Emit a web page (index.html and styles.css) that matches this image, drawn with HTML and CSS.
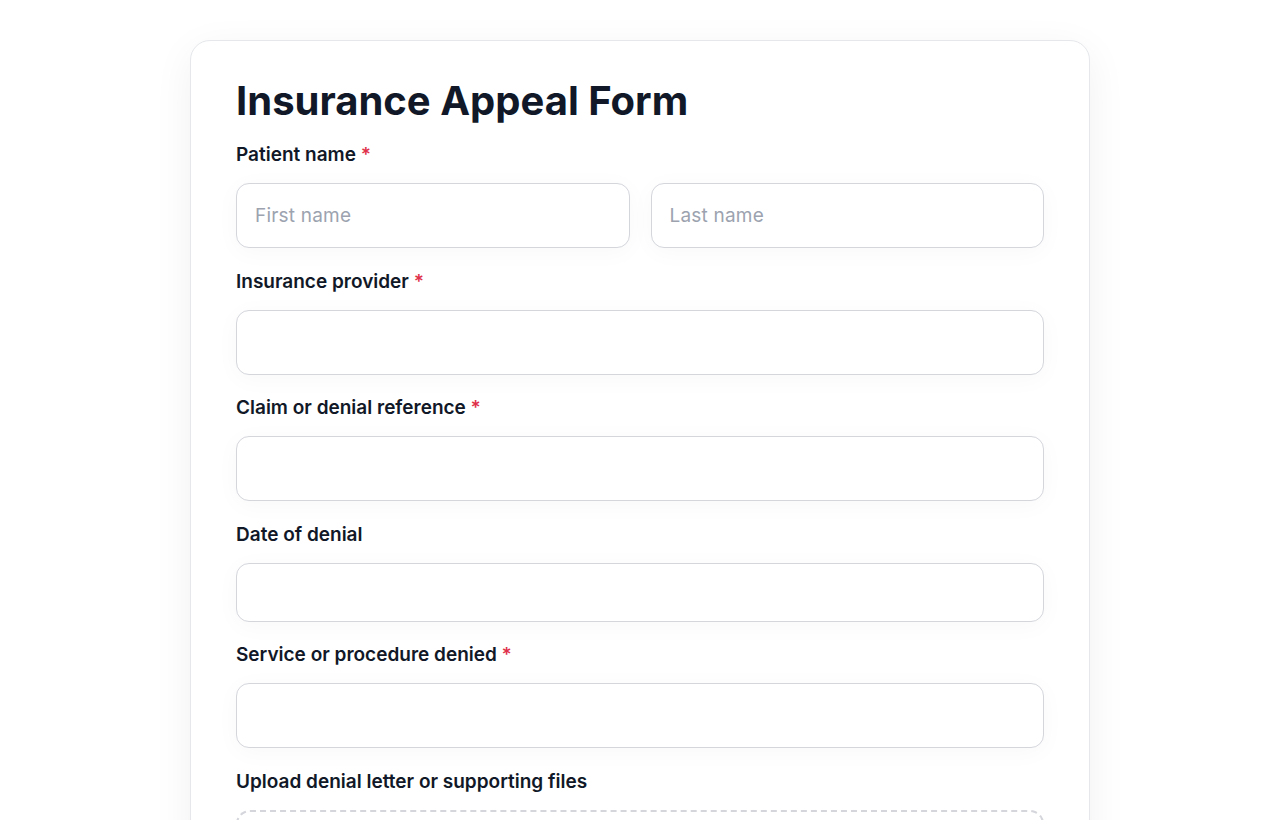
FILE: index.html
```html
<!DOCTYPE html>
<html lang="en">
<head>
  <meta charset="UTF-8" />
  <meta name="viewport" content="width=device-width, initial-scale=1.0"/>
  <title>Insurance Appeal Form</title>
  <link rel="stylesheet" href="styles.css">
</head>
<body>
  <div class="card">
    <h1 class="title">Insurance Appeal Form</h1>

    <div class="field">
      <label class="label">Patient name <span class="req">*</span></label>
      <div class="row">
        <input class="input" type="text" placeholder="First name">
        <input class="input" type="text" placeholder="Last name">
      </div>
    </div>

    <div class="field">
      <label class="label">Insurance provider <span class="req">*</span></label>
      <input class="input" type="text">
    </div>

    <div class="field">
      <label class="label">Claim or denial reference <span class="req">*</span></label>
      <input class="input" type="text">
    </div>

    <div class="field">
      <label class="label">Date of denial</label>
      <input class="input short" type="text">
    </div>

    <div class="field">
      <label class="label">Service or procedure denied <span class="req">*</span></label>
      <input class="input" type="text">
    </div>

    <div class="field">
      <label class="label">Upload denial letter or supporting files</label>
      <div class="dropzone"></div>
    </div>
  </div>
</body>
</html>
```

FILE: styles.css
```css
body {
  margin: 0;
  background: #fff;
  color: #111827;
  font-family: Inter, "Noto Sans", sans-serif;
}

.card {
  width: 808px;
  margin: 40px auto 0;
  padding: 36px 45px 40px;
  border: 1px solid #e5e7eb;
  border-radius: 20px;
  background: #fff;
  box-shadow: 0 10px 40px rgba(15, 23, 42, 0.06);
}

.title {
  margin: 0 0 18px;
  font-size: 40px;
  line-height: 48px;
  font-weight: 700;
  color: #111827;
}

.field {
  display: flex;
  flex-direction: column;
  margin-bottom: 21.5px;
}

.label {
  font-size: 19px;
  line-height: 24px;
  font-weight: 600;
  color: #111827;
  margin-bottom: 16px;
}

.req {
  color: #e0314b;
}

.row {
  display: flex;
  gap: 21px;
}

.input {
  box-sizing: border-box;
  width: 100%;
  height: 65px;
  padding: 0 18px;
  border: 1px solid #d4d6dc;
  border-radius: 13px;
  background: #fff;
  font-family: inherit;
  font-size: 19px;
  letter-spacing: 0.2px;
  color: #111827;
  box-shadow: 0 4px 24px rgba(15, 23, 42, 0.03);
  outline: none;
}

.input::placeholder {
  color: #9ca3af;
}

.input.short {
  height: 59px;
}

.dropzone {
  height: 140px;
  border: 2px dashed #d4d6dc;
  border-radius: 14px;
}
```
